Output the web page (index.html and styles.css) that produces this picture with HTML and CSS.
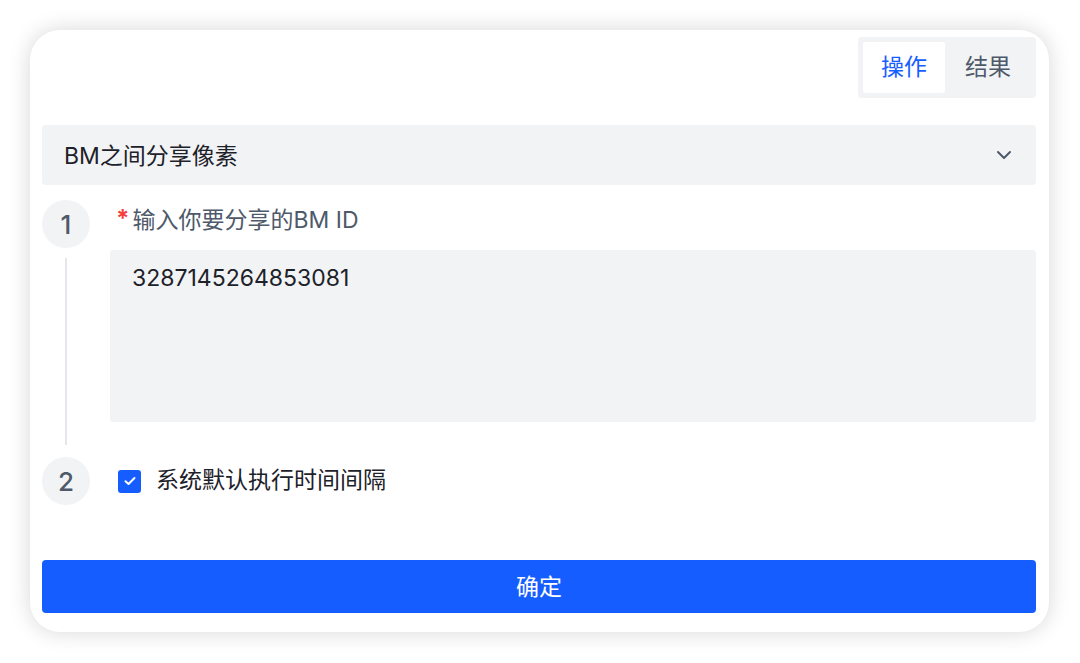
FILE: index.html
```html
<!DOCTYPE html>
<html lang="zh-CN">
<head>
<meta charset="utf-8">
<title>BM之间分享像素</title>
<link rel="stylesheet" href="styles.css">
</head>
<body>
<div class="card">
  <div class="tabs-row">
    <div class="tabs">
      <div class="tab tab-a active">操作</div>
      <div class="tab tab-b">结果</div>
    </div>
  </div>
  <div class="select">
    <span class="select-text">BM之间分享像素</span>
    <svg class="chevron" width="16" height="10" viewBox="0 0 16 10"><path d="M2 2 L8 8 L14 2" fill="none" stroke="#4e5969" stroke-width="2" stroke-linecap="round" stroke-linejoin="round"/></svg>
  </div>
  <div class="steps">
    <div class="step step-first">
      <div class="step-left">
        <div class="step-num">1</div>
        <div class="step-line"></div>
      </div>
      <div class="step-body">
        <div class="field-label"><span class="req">*</span>输入你要分享的BM ID</div>
        <div class="textarea">3287145264853081</div>
      </div>
    </div>
    <div class="step step-last">
      <div class="step-left">
        <div class="step-num">2</div>
      </div>
      <div class="step-body check-row">
        <span class="checkbox">
          <svg width="12" height="10" viewBox="0 0 12 10"><path d="M1.5 5.2 L4.5 8 L10.5 2" fill="none" stroke="#fff" stroke-width="2" stroke-linecap="round" stroke-linejoin="round"/></svg>
        </span>
        <span class="check-label">系统默认执行时间间隔</span>
      </div>
    </div>
  </div>
  <div class="btn"><span class="btn-text">确定</span></div>
</div>
</body>
</html>
```
FILE: styles.css
```css
* { box-sizing: border-box; }
html, body { margin: 0; padding: 0; background: #fff; }
body {
  font-family: Inter, "Noto Sans CJK SC", "Noto Sans", sans-serif;
  font-size: 23px;
  color: #1d2129;
  padding: 30px 31px 31px 30px;
}
.card {
  width: 1019px;
  height: 602px;
  background: #fff;
  border-radius: 30px;
  box-shadow: 0 0 22px rgba(0, 0, 0, 0.16);
  padding: 7px 13px 19px 12px;
  display: flex;
  flex-direction: column;
}
.tabs-row { display: flex; justify-content: flex-end; }
.tabs {
  display: flex;
  background: #f2f3f5;
  border-radius: 4px;
  padding: 5px;
  height: 61px;
}
.tab {
  height: 51px;
  line-height: 50px;
  text-align: center;
  color: #4e5969;
  border-radius: 2px;
}
.tab-a { width: 82px; }
.tab-b { width: 86px; }
.tab.active { background: #fff; color: #165dff; }
.select {
  margin-top: 27px;
  height: 60px;
  background: #f2f3f5;
  border-radius: 4px;
  display: flex;
  align-items: center;
  justify-content: space-between;
  padding: 0 24px 0 22px;
}
.select-text { line-height: 32px; padding-top: 2px; }
.chevron { display: block; }
.steps { margin-top: 15px; display: flex; flex-direction: column; }
.step { display: grid; grid-template-columns: 48px 1fr; column-gap: 20px; }
.step-left { display: flex; flex-direction: column; align-items: center; }
.step-num {
  width: 48px; height: 48px; border-radius: 50%;
  background: #f2f3f5; color: #4e5969;
  display: flex; align-items: center; justify-content: center;
  font-family: Inter, "Noto Sans", sans-serif;
  font-size: 26px;
  font-weight: 500;
  flex: none;
}
.step-line { flex: 1; width: 2px; background: #e5e6eb; margin: 10px 0 12px; }
.step-first .step-body { padding-bottom: 35px; }
.field-label { margin-top: 3px; line-height: 32px; color: #4e5969; padding-left: 6px; height: 32px; }
.req { color: #f53f3f; font-size: 24px; font-weight: 700; margin-right: 3px; vertical-align: 1px; }
.textarea {
  margin-top: 15px;
  height: 172px;
  background: #f2f3f5;
  border-radius: 4px;
  padding: 12px 22px;
  line-height: 32px;
}
.check-row { display: flex; align-items: center; padding-left: 8px; }
.checkbox {
  width: 23px; height: 23px; border-radius: 3px;
  background: #165dff;
  display: flex; align-items: center; justify-content: center;
  margin-right: 15px;
}
.checkbox svg { display: block; }
.check-label { line-height: 32px; padding-bottom: 3px; }
.btn {
  margin-top: 55px;
  height: 53px;
  background: #165dff;
  border-radius: 4px;
  color: #fff;
  display: flex; align-items: center; justify-content: center;
}
.btn-text { padding-bottom: 3px; }
```
